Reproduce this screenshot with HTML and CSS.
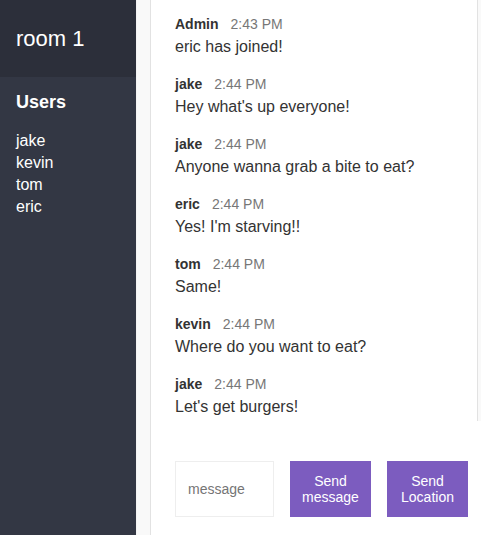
FILE: index.html
```html
<!DOCTYPE html>
<html>
<head>
<meta charset="utf-8">
<title>Chat</title>
<link rel="stylesheet" href="styles.css">
</head>
<body>
<div class="chat">
  <aside class="sidebar">
    <h2 class="room-title">room 1</h2>
    <h3 class="list-title">Users</h3>
    <ul class="users">
      <li>jake</li>
      <li>kevin</li>
      <li>tom</li>
      <li>eric</li>
    </ul>
  </aside>
  <div class="track track--side"></div>
  <main class="main">
    <div class="messages-wrap">
      <div class="messages">
        <div class="message">
          <p><span class="name">Admin</span><span class="meta">2:43 PM</span></p>
          <p>eric has joined!</p>
        </div>
        <div class="message">
          <p><span class="name">jake</span><span class="meta">2:44 PM</span></p>
          <p>Hey what's up everyone!</p>
        </div>
        <div class="message">
          <p><span class="name">jake</span><span class="meta">2:44 PM</span></p>
          <p>Anyone wanna grab a bite to eat?</p>
        </div>
        <div class="message">
          <p><span class="name">eric</span><span class="meta">2:44 PM</span></p>
          <p>Yes! I'm starving!!</p>
        </div>
        <div class="message">
          <p><span class="name">tom</span><span class="meta">2:44 PM</span></p>
          <p>Same!</p>
        </div>
        <div class="message">
          <p><span class="name">kevin</span><span class="meta">2:44 PM</span></p>
          <p>Where do you want to eat?</p>
        </div>
        <div class="message">
          <p><span class="name">jake</span><span class="meta">2:44 PM</span></p>
          <p>Let's get burgers!</p>
        </div>
      </div>
      <div class="track track--msg"></div>
    </div>
    <div class="compose">
      <form class="compose-form">
        <input class="compose-input" placeholder="message">
        <button type="button" class="btn">Send message</button>
      </form>
      <button type="button" class="btn">Send Location</button>
    </div>
  </main>
</div>
</body>
</html>
```

FILE: styles.css
```css
* { box-sizing: border-box; }
html, body {
  margin: 0;
  padding: 0;
  height: 100%;
  overflow: hidden;
}
body {
  font-family: "Liberation Sans", Arial, Helvetica, sans-serif;
  color: #333333;
  background: #ffffff;
}
.chat {
  display: flex;
  height: 100vh;
}
.sidebar {
  width: 136px;
  flex-shrink: 0;
  background: #333744;
  color: #ffffff;
}
.room-title {
  margin: 0;
  font-weight: 400;
  font-size: 22px;
  line-height: 25px;
  padding: 26px 16px;
  background: #2c2f3a;
}
.list-title {
  margin: 0;
  font-weight: 700;
  font-size: 18px;
  line-height: 20px;
  padding: 15px 16px 0 16px;
}
.users {
  list-style: none;
  margin: 0;
  padding: 18px 16px 0 16px;
  font-size: 16px;
  line-height: 22px;
}
.track {
  flex-shrink: 0;
  background: #f9f9f9;
}
.track--side {
  width: 15px;
  border-left: 1px solid #f3f3f3;
  border-right: 1px solid #e2e2e2;
}
.track--msg {
  width: 4px;
  border-left: 1px solid #e2e2e2;
}
.main {
  flex: 1;
  display: flex;
  flex-direction: column;
  min-width: 0;
}
.messages-wrap {
  flex: 1;
  display: flex;
  min-height: 0;
  overflow: hidden;
}
.messages {
  flex: 1;
  padding: 15px 24px 0 24px;
  overflow: hidden;
}
.message {
  margin-bottom: 19px;
}
.message p {
  margin: 0 0 5px 0;
  font-size: 16px;
  line-height: 18px;
  white-space: nowrap;
}
.name {
  font-weight: 700;
  font-size: 14px;
  margin-right: 12px;
  color: #333333;
}
.meta {
  font-size: 14px;
  color: #777777;
}
.compose {
  display: flex;
  flex-shrink: 0;
  margin-top: 16px;
  padding: 24px 24px 18px 24px;
}
.compose-form {
  display: flex;
  margin: 0 16px 0 0;
}
.compose-input {
  width: 99px;
  height: 56px;
  border: 1px solid #eeeeee;
  padding: 12px;
  margin: 0 16px 0 0;
  font-family: "Liberation Sans", Arial, sans-serif;
  font-size: 14px;
  color: #333333;
  outline: none;
}
.compose-input::placeholder {
  color: #757575;
}
.btn {
  width: 81px;
  height: 56px;
  flex-shrink: 0;
  padding: 12px 4px;
  background: #7c5cbf;
  border: none;
  color: #ffffff;
  font-family: "Liberation Sans", Arial, sans-serif;
  font-size: 14px;
  line-height: 16px;
  cursor: pointer;
}
```
